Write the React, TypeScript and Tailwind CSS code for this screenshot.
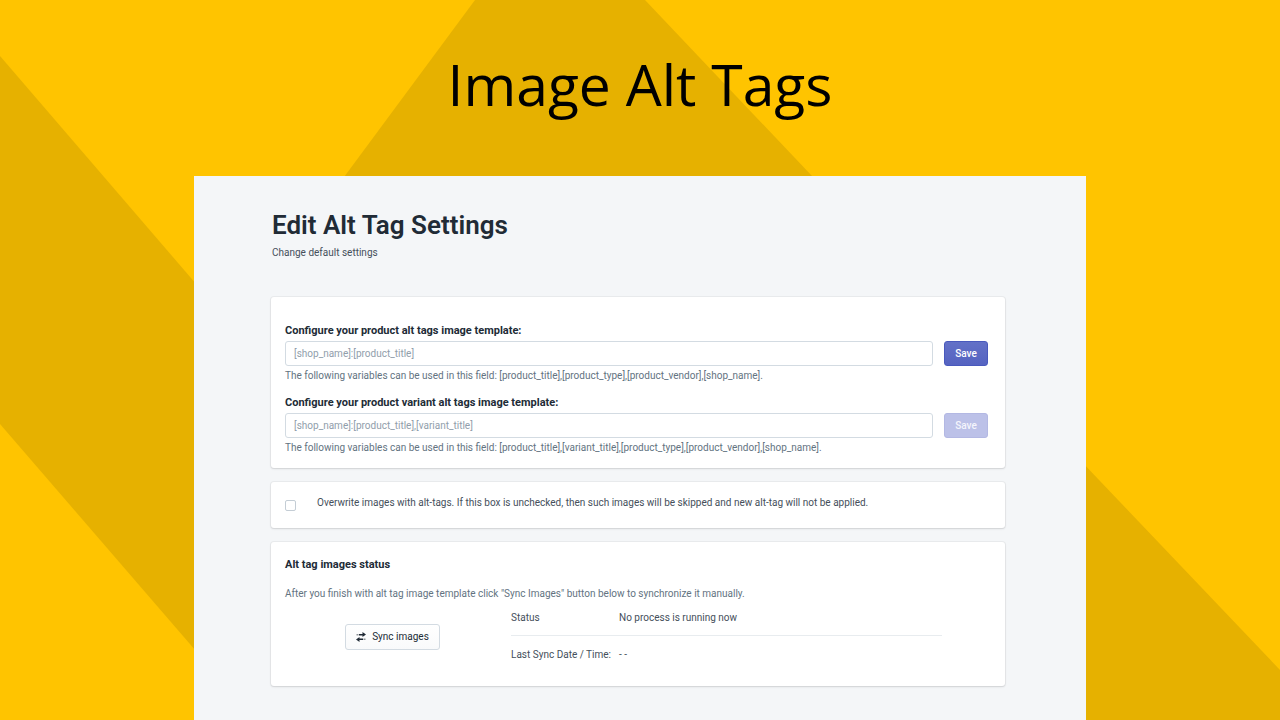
import React from 'react';

interface TemplateFieldProps {
  id: string;
  label: string;
  placeholder: string;
  help: string;
  disabled?: boolean;
}

const Card: React.FC<{ className: string; children: React.ReactNode }> = ({ className, children }) => (
  <section
    className={`rounded-[3px] bg-white shadow-[0_0_0_1px_rgba(63,63,68,0.05),0_1px_2px_0_rgba(63,63,68,0.15)] ${className}`}
  >
    {children}
  </section>
);

const TemplateField: React.FC<TemplateFieldProps> = ({ id, label, placeholder, help, disabled }) => {
  return (
    <div>
      <label htmlFor={id} className="block text-[11px] leading-4 font-bold text-[#212b36]">
        {label}
      </label>
      <div className="mt-[2px] flex items-center gap-[11px]">
        <input
          id={id}
          type="text"
          placeholder={placeholder}
          className="h-[25px] min-w-0 flex-1 rounded-[3px] border border-[#d3dbe2] bg-white px-2 text-[10px] text-[#212b36] placeholder:text-[#919eab]"
        />
        <button
          type="button"
          disabled={disabled}
          className="h-[25px] w-11 rounded-[3px] border border-[#4959bd] bg-linear-to-b from-[#6371c7] to-[#5563c1] text-[10px] font-medium text-white disabled:border-[#b3b8e3] disabled:bg-none disabled:bg-[#bcc1e8] disabled:text-[#f4f5fc]"
        >
          Save
        </button>
      </div>
      <p className="mt-[2px] text-[10px] leading-4 text-[#637381]">{help}</p>
    </div>
  );
};

const Backdrop: React.FC = () => (
  <svg
    className="absolute inset-0 h-full w-full"
    viewBox="0 0 1280 720"
    preserveAspectRatio="none"
    fill="#e6b100"
    aria-hidden="true"
  >
    <path d="M0 56 L240 335 V702 L0 424 Z" />
    <path d="M475 0 H645 L831 196 H330 Z" />
    <path d="M1040 418 L1280 670 V720 H1040 Z" />
  </svg>
);

const SyncIcon: React.FC = () => (
  <svg width="10" height="10" viewBox="0 0 20 20" fill="#212b36" aria-hidden="true">
    <path d="M6 4 H13 V0 L20 5 L13 10 V7 H6 Z" />
    <path d="M14 13 H7 V10 L0 15 L7 20 V16 H14 Z" />
    <path d="M1 4 H5 V7 H1 Z M15 13 H19 V16 H15 Z" opacity="0.5" />
  </svg>
);

const App: React.FC = () => {
  return (
    <div className="relative flex min-h-screen flex-col overflow-hidden bg-[#ffc400] font-[Roboto,sans-serif]">
      <Backdrop />
      <h1 className="relative pt-[46px] pb-[54px] text-center font-['Open_Sans',sans-serif] text-[57px] leading-[76px] text-black">
        Image Alt Tags
      </h1>

      <main className="relative mx-auto w-full max-w-[892px] flex-1 bg-[#f4f6f8] pt-[33px] pr-[81px] pb-8 pl-[77px] text-[10px] leading-4 text-[#454f5b]">
        <header className="pl-px">
          <h2 className="text-[26px] leading-8 font-semibold text-[#212b36]">Edit Alt Tag Settings</h2>
          <p className="mt-1">Change default settings</p>
        </header>

        <div className="mt-9 flex flex-col gap-[14px]">
          <Card className="flex flex-col gap-[11px] pt-[26px] pr-[17px] pb-3 pl-[14px]">
            <TemplateField
              id="product-template"
              label="Configure your product alt tags image template:"
              placeholder="[shop_name]:[product_title]"
              help="The following variables can be used in this field: [product_title],[product_type],[product_vendor],[shop_name]."
            />
            <TemplateField
              id="variant-template"
              label="Configure your product variant alt tags image template:"
              placeholder="[shop_name]:[product_title],[variant_title]"
              help="The following variables can be used in this field: [product_title],[variant_title],[product_type],[product_vendor],[shop_name]."
              disabled
            />
          </Card>

          <Card className="flex items-start gap-[21px] px-[14px] pt-[13px] pb-[17px]">
            <input
              id="overwrite"
              type="checkbox"
              className="mt-[5px] size-[11px] appearance-none rounded-[2px] border border-[#c4cdd5] bg-white checked:bg-[#5c6ac4]"
            />
            <label htmlFor="overwrite">
              Overwrite images with alt-tags. If this box is unchecked, then such images will be skipped and new alt-tag
              will not be applied.
            </label>
          </Card>

          <Card className="px-[14px] pt-[15px] pb-[23px]">
            <h3 className="text-[11px] leading-4 font-bold text-[#212b36]">Alt tag images status</h3>
            <p className="mt-[13px] text-[#637381]">
              After you finish with alt tag image template click "Sync Images" button below to synchronize it manually.
            </p>
            <div className="mt-2 flex items-center">
              <div className="flex w-[215px] shrink-0 justify-center">
                <button
                  type="button"
                  className="flex h-[26px] items-center gap-[6px] rounded-[3px] border border-[#d3dbe2] bg-linear-to-b from-white to-[#f9fafb] px-[10px] text-[#212b36]"
                >
                  <SyncIcon />
                  Sync images
                </button>
              </div>
              <dl className="mr-[49px] ml-[11px] flex-1">
                <div className="flex border-b border-[#e8ecef] pb-[9px]">
                  <dt className="w-[108px]">Status</dt>
                  <dd>No process is running now</dd>
                </div>
                <div className="flex pt-[11px]">
                  <dt className="w-[108px]">Last Sync Date / Time:</dt>
                  <dd>- -</dd>
                </div>
              </dl>
            </div>
          </Card>
        </div>
      </main>
    </div>
  );
};

export default App;
